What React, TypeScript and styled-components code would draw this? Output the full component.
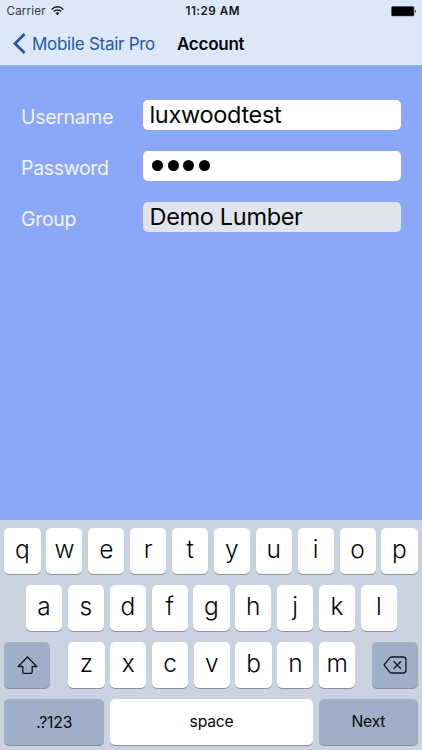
import React from "react";
import styled, { createGlobalStyle } from "styled-components";

const GlobalStyle = createGlobalStyle`
  * { box-sizing: border-box; }
  body { margin: 0; }
  button, input { font: inherit; color: inherit; border: 0; margin: 0; padding: 0; }
`;

const Screen = styled.div`
  width: 422px;
  height: 750px;
  display: flex;
  flex-direction: column;
  overflow: hidden;
  background: #8aa8f7;
  color: #050608;
  font-family: Inter, "Liberation Sans", sans-serif;
`;

const Header = styled.header`
  height: 66px;
  flex: none;
  background: #dce8f8;
  border-bottom: 1px solid #94afe9;
`;

const StatusBar = styled.div`
  height: 22px;
  display: grid;
  grid-template-columns: 1fr auto 1fr;
  align-items: center;
  padding: 0 5px 0 6.5px;
  font-size: 11.7px;
  line-height: 22px;
`;

const Carrier = styled.div`
  display: flex;
  align-items: center;
  gap: 5px;
  color: #34383e;
  letter-spacing: 0.12px;
`;

const Clock = styled.div`
  font-weight: 600;
  color: #15181c;
  letter-spacing: 0.5px;
  padding-left: 2px;
`;

const Battery = styled.svg`
  justify-self: end;
`;

const NavBar = styled.nav`
  height: 43px;
  display: flex;
  align-items: center;
  padding-left: 13px;
`;

const BackButton = styled.button`
  width: 164px;
  display: flex;
  align-items: center;
  gap: 6px;
  background: none;
  color: #2459a6;
  font-size: 17px;
  letter-spacing: -0.28px;
  white-space: nowrap;
`;

const Title = styled.h1`
  margin: 0;
  font-size: 17px;
  font-weight: 600;
  letter-spacing: -0.25px;
`;

const Form = styled.main`
  flex: 1;
  padding: 34px 21px 0;
  display: flex;
  flex-direction: column;
  gap: 21px;
`;

const Field = styled.label`
  height: 30px;
  display: grid;
  grid-template-columns: 122px 258px;
  align-items: center;
`;

const FieldName = styled.span`
  padding-top: 4px;
  color: #f1f5ff;
  font-size: 19.5px;
  line-height: 26px;
  letter-spacing: -0.32px;
`;

const FieldBox = styled.span<{ $disabled?: boolean }>`
  height: 30px;
  padding-left: 6.5px;
  display: flex;
  align-items: center;
  border-radius: 5px;
  background: ${(p) => (p.$disabled ? "#e1e4ec" : "#fff")};
  font-size: 23.5px;
  line-height: 32px;
  letter-spacing: -0.32px;
  white-space: nowrap;
`;

const Dots = styled.span`
  display: flex;
  gap: 4.6px;
  padding: 0 0 1px 2.5px;
`;

const Dot = styled.i`
  width: 11px;
  height: 11px;
  border-radius: 50%;
  background: #000;
`;

const Keyboard = styled.section`
  height: 230.4px;
  flex: none;
  padding: 8.2px 4.4px 0;
  display: flex;
  flex-direction: column;
  gap: 11.2px;
  background: linear-gradient(#c9d2df, #ccd3e0);
`;

const KeyRow = styled.div<{ $left?: number; $right?: number }>`
  height: 45.8px;
  display: flex;
  justify-content: space-between;
  padding: 0 ${(p) => p.$right ?? 0}px 0 ${(p) => p.$left ?? 0}px;
`;

const LetterGroup = styled.div`
  display: flex;
  gap: 5.6px;
  padding-left: 1.6px;
`;

const Key = styled.button<{ $width?: number; $muted?: boolean; $small?: boolean; $drop?: number }>`
  width: ${(p) => p.$width ?? 36.2}px;
  height: 45.8px;
  display: flex;
  align-items: center;
  justify-content: center;
  padding-top: ${(p) => p.$drop ?? 0}px;
  padding-bottom: ${(p) => (p.$small ? 0 : 3)}px;
  border-radius: 5px;
  background: ${(p) => (p.$muted ? "#a0afc7" : "#fff")};
  box-shadow: 0 1px 0 #8b929e;
  font-size: ${(p) => (p.$small ? 15.7 : 24.5)}px;
  font-weight: ${(p) => (p.$small ? 400 : 330)};
  letter-spacing: ${(p) => (p.$small ? "-0.2px" : "0")};
  line-height: 30px;
`;

const WifiIcon = () => (
  <svg width="13" height="10" viewBox="0 0 13 10" fill="none" stroke="#15181c" strokeWidth="1.5">
    <path d="M.8 3.5C4-.1 9-.1 12.2 3.5" />
    <path d="M2.8 5.6c2.1-2.2 5.3-2.2 7.4 0" />
    <path d="M6.5 9.2 4.5 7.1q2-1.6 4 0z" fill="#15181c" stroke="none" />
  </svg>
);

const BatteryIcon = () => (
  <Battery width="26" height="11" viewBox="0 0 26 11">
    <rect x=".5" y=".5" width="22.5" height="9.5" rx="1" fill="#000" stroke="#50555d" strokeWidth=".6" />
    <path d="M24 3.5q2 1.8 0 3.6z" fill="#20242a" />
  </Battery>
);

const ChevronIcon = () => (
  <svg width="13" height="21" viewBox="0 0 13 21" fill="none" stroke="#2459a6" strokeWidth="2.8">
    <path d="M11.6 1 2 10.5 11.6 20" />
  </svg>
);

const ShiftIcon = () => (
  <svg width="21" height="19" viewBox="0 0 21 19" fill="none" stroke="#101722" strokeWidth="1.3" strokeLinejoin="round">
    <path d="M10.5 1 1.2 10.5h4.6v5.7q0 1.1 1.1 1.1h7.2q1.1 0 1.1-1.1v-5.7h4.6z" />
  </svg>
);

const DeleteIcon = () => (
  <svg width="24" height="18" viewBox="0 0 24 18" fill="none" stroke="#101722" strokeWidth="1.3" strokeLinejoin="round">
    <path d="M8.6 1H20q3 0 3 3v10q0 3-3 3H8.6q-1 0-1.6-.7L1 9l6-7.3Q7.6 1 8.6 1z" />
    <path d="m10.7 5.3 7.2 7.4m0-7.4-7.2 7.4" />
  </svg>
);

const letters = (row: string) => row.split("").map((c) => <Key key={c}>{c}</Key>);

export default function App() {
  return (
    <Screen>
      <GlobalStyle />
      <Header>
        <StatusBar>
          <Carrier>Carrier <WifiIcon /></Carrier>
          <Clock>11:29 AM</Clock>
          <BatteryIcon />
        </StatusBar>
        <NavBar>
          <BackButton><ChevronIcon />Mobile Stair Pro</BackButton>
          <Title>Account</Title>
        </NavBar>
      </Header>
      <Form>
        <Field>
          <FieldName>Username</FieldName>
          <FieldBox>luxwoodtest</FieldBox>
        </Field>
        <Field>
          <FieldName>Password</FieldName>
          <FieldBox><Dots><Dot /><Dot /><Dot /><Dot /></Dots></FieldBox>
        </Field>
        <Field>
          <FieldName>Group</FieldName>
          <FieldBox $disabled>Demo Lumber</FieldBox>
        </Field>
      </Form>
      <Keyboard>
        <KeyRow>{letters("qwertyuiop")}</KeyRow>
        <KeyRow $left={21.6} $right={20.7}>{letters("asdfghjkl")}</KeyRow>
        <KeyRow>
          <Key $width={45.5} $muted $small $drop={2}><ShiftIcon /></Key>
          <LetterGroup>{letters("zxcvbnm")}</LetterGroup>
          <Key $width={45.5} $muted $small $drop={1}><DeleteIcon /></Key>
        </KeyRow>
        <KeyRow>
          <Key $width={99.7} $muted $small $drop={2}>.?123</Key>
          <Key $width={203} $small>space</Key>
          <Key $width={98.5} $muted $small>Next</Key>
        </KeyRow>
      </Keyboard>
    </Screen>
  );
}
